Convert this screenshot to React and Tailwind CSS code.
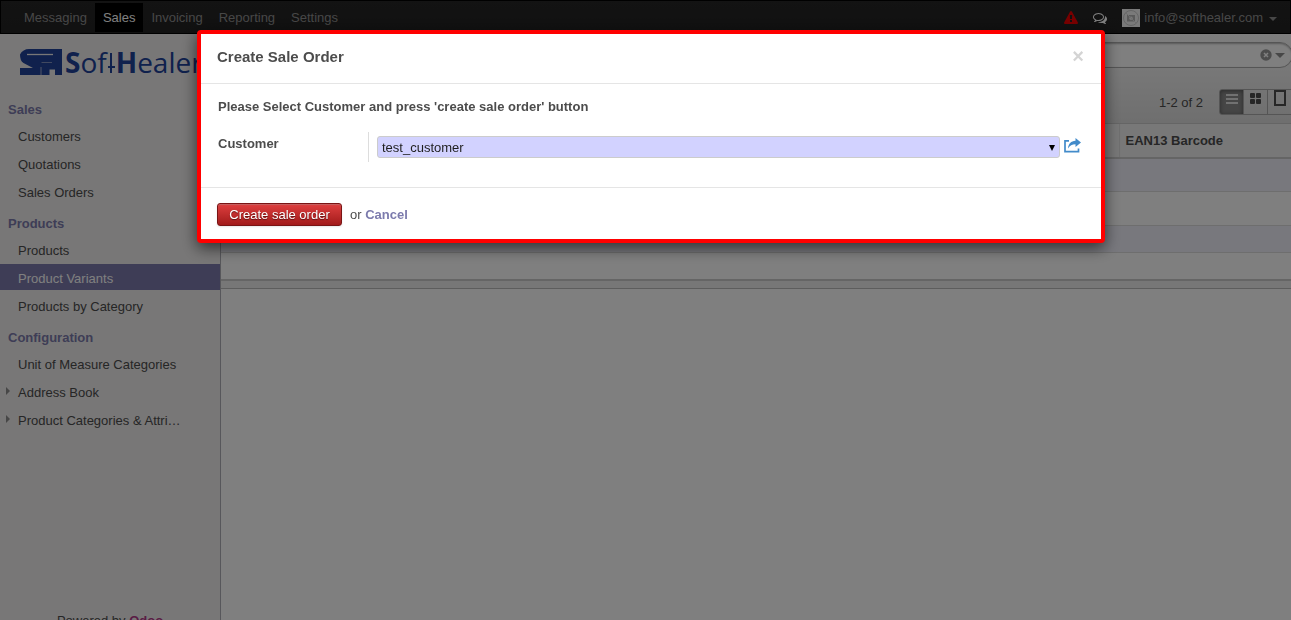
import { useState } from 'react';

const menus = ['Messaging', 'Sales', 'Invoicing', 'Reporting', 'Settings'];

const sections = [
  { title: 'Sales', items: [{ name: 'Customers' }, { name: 'Quotations' }, { name: 'Sales Orders' }] },
  { title: 'Products', items: [{ name: 'Products' }, { name: 'Product Variants' }, { name: 'Products by Category' }] },
  {
    title: 'Configuration',
    items: [
      { name: 'Unit of Measure Categories' },
      { name: 'Address Book', children: true },
      { name: 'Product Categories & Attributes', short: 'Product Categories & Attri…', children: true },
    ],
  },
];

function WarningIcon() {
  return (
    <svg viewBox="0 0 1792 1792" className="size-[14px] fill-[#f00000]" aria-hidden="true">
      <path d="M1024 1375v-190q0-14-9.5-23.5t-22.5-9.5h-192q-13 0-22.5 9.5t-9.5 23.5v190q0 14 9.5 23.5t22.5 9.5h192q13 0 22.5-9.5t9.5-23.5zm-2-374l18-459q0-12-10-19-13-11-24-11h-220q-11 0-24 11-10 7-10 21l17 457q0 10 10 16.5t24 6.5h185q14 0 23.5-6.5t10.5-16.5zm-14-934l768 1408q35 63-2 126-17 29-46.5 46t-63.5 17h-1536q-34 0-63.5-17t-46.5-46q-37-63-2-126l768-1408q17-31 47-49t65-18 65 18 47 49z" />
    </svg>
  );
}

function ChatIcon() {
  return (
    <svg viewBox="0 0 1792 1792" className="size-[14px] fill-white" aria-hidden="true">
      <path d="M704 384q-153 0-286 52t-211.5 141-78.5 191q0 82 53 158t149 132l97 56-35 84q34-20 62-39l44-31 53 10q78 14 153 14 153 0 286-52t211.5-141 78.5-191-78.5-191-211.5-141-286-52zm0-128q191 0 353.5 68.5t256.5 186.5 94 257-94 257-256.5 186.5-353.5 68.5q-86 0-176-16-124 88-278 128-36 9-86 16h-3q-11 0-20.5-8t-11.5-21q-1-3-1-6.5t.5-6.5 2-6l2.5-5 3.5-5.5 4-5 4.5-5 4-4.5q5-6 23-25t26-29.5 22.5-29 25-38.5 20.5-44q-124-72-195-177t-71-224q0-139 94-257t256.5-186.5 353.5-68.5zm822 1169q10 24 20.5 44t25 38.5 22.5 29 26 29.5 23 25q1 1 4 4.5t4.5 5 4 5 3.5 5.5l2.5 5 2 6 .5 6.5-1 6.5q-3 14-13 22t-22 7q-50-7-86-16-154-40-278-128-90 16-176 16-271 0-472-132 58 4 88 4 161 0 309-45t264-129q125-92 192-212t67-254q0-77-23-152 129 71 204 178t75 230q0 120-71 224.5t-195 176.5z" />
    </svg>
  );
}

function Avatar() {
  return (
    <svg viewBox="0 0 18 18" className="size-[18px]" aria-hidden="true">
      <rect width="18" height="18" fill="#f4f4f4" />
      <circle cx="9" cy="9" r="7.5" fill="none" stroke="#ccc" />
      <path d="M5 6h8v6.500H5z" fill="#b5b5b5" />
      <circle cx="9" cy="9.3" r="1.8" fill="#eee" />
      <path d="M3.7 3.7l10.6 10.6" stroke="#ddd" />
    </svg>
  );
}

function Logo() {
  return (
    <div className="flex items-center text-[#20429a]">
      <svg viewBox="0 0 42 26" className="h-[26px] w-[42px] shrink-0" aria-hidden="true">
        <path d="M0 5.500Q3 0 9 0H42V26H35V20.500H29.500V26H0V19H13L3.500 14Q0 12 0 5.500Z" fill="currentColor" />
        <path d="M7 5.500H33" stroke="#f0eeee" strokeWidth="1.300" />
        <path d="M21.500 13.500H32" stroke="#f0eeee" strokeWidth="0.800" opacity="0.6" />
        <path d="M21 26V18" stroke="#f0eeee" strokeWidth="0.800" opacity="0.8" />
      </svg>
      <span className="ml-[3px] flex items-baseline font-['Open_Sans',sans-serif] text-[28px] leading-8">
        <b>S</b>of
        <svg viewBox="0 0 9 20" className="h-5 w-[9px]" aria-hidden="true">
          <path d="M4 0V20M1 14H8" fill="none" stroke="currentColor" strokeWidth="2" />
        </svg>
        <b>H</b>ealer
      </span>
    </div>
  );
}

function TopBar() {
  return (
    <header className="flex h-[34px] shrink-0 items-center justify-between border border-black bg-linear-to-b from-[#262626] to-[#222] pl-[15px] pr-[13px] text-[#8f8f8f]">
      <nav className="flex">
        {menus.map((menu) => (
          <a
            key={menu}
            href="#"
            className={`px-2 pt-px leading-7 ${menu === 'Sales' ? 'bg-black text-white' : ''}`}
          >
            {menu}
          </a>
        ))}
      </nav>
      <div className="flex items-center pt-[2px]">
        <WarningIcon />
        <span className="ml-[15px] flex">
          <ChatIcon />
        </span>
        <button type="button" className="ml-[15px] flex items-center gap-1">
          <Avatar />
          info@softhealer.com
          <span className="ml-[2px] mt-[2px] border-x-4 border-t-4 border-x-transparent border-t-[#8f8f8f]" />
        </button>
      </div>
    </header>
  );
}

function Sidebar() {
  return (
    <aside className="flex w-[221px] shrink-0 flex-col border-r border-[#afafb6] bg-[#f0eeee]">
      <div className="flex h-[58px] shrink-0 items-center pb-[2px] pl-5">
        <Logo />
      </div>
      {sections.map((section) => (
        <section key={section.title}>
          <h2 className="pb-[2px] pl-2 pt-2 font-bold leading-5 text-[#7c7bad]">{section.title}</h2>
          <ul>
            {section.items.map((item) => (
              <li key={item.name} className="mb-[2px]">
                <a
                  href="#"
                  className={`flex h-[26px] items-center pl-[6px] ${
                    item.name === 'Product Variants' ? 'bg-[#7c7bad] text-white' : 'text-[#4c4c4c]'
                  }`}
                >
                  <span className="w-3">
                    {item.children && (
                      <span className="block size-0 border-y-4 border-l-4 border-y-transparent border-l-[#8f8f8f]" />
                    )}
                  </span>
                  <span className="pt-1 leading-5">{item.short || item.name}</span>
                </a>
              </li>
            ))}
          </ul>
        </section>
      ))}
      <footer className="-mb-[11px] mt-auto text-center leading-5">
        Powered by <a href="#" className="font-bold text-[#b5398a]">Odoo</a>
      </footer>
    </aside>
  );
}

function ViewSwitcher() {
  return (
    <div className="-mr-[2px] flex h-[26px] overflow-hidden rounded-l-[3px] border border-[#ababab] text-[#4c4c4c]">
      <button type="button" aria-label="List" className="flex w-[23px] justify-center bg-[#8c8c8c] pt-1 shadow-[inset_0_1px_4px_#555]">
        <svg viewBox="0 0 12 10" className="h-[10px] w-3" aria-hidden="true">
          <path d="M0 1h12M0 5h12M0 9h12" stroke="#fff" strokeWidth="1.500" />
        </svg>
      </button>
      <button type="button" aria-label="Kanban" className="flex w-6 justify-center border-l border-[#ababab] pt-[3px]">
        <svg viewBox="0 0 11 11" className="size-[11px] fill-current" aria-hidden="true">
          <rect width="5" height="5" rx="1" />
          <rect x="6" width="5" height="5" rx="1" />
          <rect y="6" width="5" height="5" rx="1" />
          <rect x="6" y="6" width="5" height="5" rx="1" />
        </svg>
      </button>
      <button type="button" aria-label="Form" className="flex w-[25px] justify-center border-l border-[#ababab]">
        <svg viewBox="0 0 12 16" className="h-4 w-3" aria-hidden="true">
          <rect x="1" y="1" width="10" height="14" fill="none" stroke="currentColor" strokeWidth="2" />
        </svg>
      </button>
    </div>
  );
}

function ProductList() {
  return (
    <table className="w-full border-collapse">
      <thead>
        <tr className="h-[34px] border-b-2 border-[#cacaca] bg-[#f0f0f0]">
          <th />
          <th className="w-[172px] border-l border-[#dfdfdf] pl-[6px] text-left font-bold">EAN13 Barcode</th>
        </tr>
      </thead>
      <tbody>
        <tr className="h-[33px] border-b border-[#dcdcdc] bg-[#f0f0fa]"><td colSpan={2} /></tr>
        <tr className="h-[34px] border-b border-[#dcdcdc]"><td colSpan={2} /></tr>
        <tr className="h-[27px] border-b border-[#dcdcdc] bg-[#f0f0fa]"><td colSpan={2} /></tr>
        <tr className="h-7"><td colSpan={2} /></tr>
      </tbody>
      <tfoot>
        <tr className="h-2 border-b border-t-2 border-b-[#bbb] border-t-[#cacaca] bg-[#eee]"><td colSpan={2} className="p-0" /></tr>
      </tfoot>
    </table>
  );
}

function SaleOrderDialog() {
  const [customer, setCustomer] = useState('test_customer');

  return (
    <div className="fixed inset-0 flex items-start justify-center bg-black/50 pl-[11px] pt-[30px]">
      <div
        role="dialog"
        aria-labelledby="dialog-title"
        className="w-[908px] max-w-full rounded-[4px] border-4 border-[#f00] bg-white shadow-[0_5px_15px_rgba(0,0,0,0.6)]"
      >
        <div className="flex h-[50px] items-center justify-between border-b border-[#e5e5e5] pb-[3px] pl-4 pr-[13px]">
          <h3 id="dialog-title" className="text-[15px] font-bold">Create Sale Order</h3>
          <button type="button" aria-label="Close" className="px-1 pb-[2px] text-[20px] font-bold leading-5 text-[#d4d4d4]">×</button>
        </div>
        <div className="px-[17px] pb-[25px] pt-[13px]">
          <p className="font-bold leading-5">Please Select Customer and press 'create sale order' button</p>
          <div className="mt-[15px] flex h-[30px]">
            <label htmlFor="customer" className="w-[151px] shrink-0 border-r border-[#ddd] pt-[2px] font-bold leading-5">
              Customer
            </label>
            <div className="flex flex-1 items-center pl-2">
              <div className="relative flex-1">
                <select
                  id="customer"
                  value={customer}
                  onChange={(e) => setCustomer(e.target.value)}
                  className="block h-[22px] w-full appearance-none rounded-[3px] border border-[#ccc] bg-[#d2d2ff] pl-1 pt-px text-[#1f1f1f]"
                >
                  <option value="test_customer">test_customer</option>
                </select>
                <span className="pointer-events-none absolute right-[5px] top-[9px] border-x-[3px] border-t-[6px] border-x-transparent border-t-black" />
              </div>
              <button type="button" aria-label="Open customer" className="ml-1 mr-[3px] pb-1">
                <svg viewBox="0 0 17 15" className="h-[15px] w-[17px]" aria-hidden="true">
                  <path d="M5 2.800H1V13.700H14.500V10.500" fill="none" stroke="#428bca" strokeWidth="1.700" />
                  <path d="M11.500 0L17 4.500L11.500 9V6.300C8 6.300 6 7.300 4 10.500C4.300 6 7 3 11.500 2.800Z" fill="#428bca" />
                </svg>
              </button>
            </div>
          </div>
        </div>
        <div className="flex items-center border-t border-[#e5e5e5] px-4 pb-[13px] pt-[15px]">
          <button
            type="button"
            className="h-[23px] w-[125px] rounded-[3px] border border-[#7a1414] bg-linear-to-b from-[#df3f3f] to-[#a21a1a] text-white shadow-[0_1px_2px_rgba(0,0,0,0.1),inset_0_1px_1px_rgba(155,155,155,0.4)] text-shadow-[0_1px_1px_rgba(0,0,0,0.5)]"
          >
            Create sale order
          </button>
          <span className="ml-2">
            or <a href="#" className="font-bold text-[#7c7bad]">Cancel</a>
          </span>
        </div>
      </div>
    </div>
  );
}

export default function App() {
  return (
    <div className="flex h-screen flex-col overflow-hidden bg-white font-['Liberation_Sans',Arial,sans-serif] text-[13px] text-[#4c4c4c]">
      <TopBar />
      <div className="flex min-h-0 flex-1">
        <Sidebar />
        <main className="min-w-0 flex-1 overflow-hidden">
          <div className="border-b border-[#cacaca] bg-linear-to-b from-[#fcfcfc] to-[#dedede] pt-2">
            <div className="flex justify-end">
              <div className="-mr-[2px] flex h-[26px] w-[400px] items-center rounded-full border border-[#ababab] bg-white pr-[7px] shadow-[inset_0_1px_2px_rgba(0,0,0,0.3)]">
                <input aria-label="Search" className="min-w-0 flex-1 bg-transparent px-3 outline-none" />
                <button type="button" aria-label="Clear search">
                  <svg viewBox="0 0 12 12" className="size-3" aria-hidden="true">
                    <circle cx="6" cy="6" r="5.700" fill="#999" />
                    <path d="M4 4l4 4M8 4l-4 4" stroke="#fff" strokeWidth="1.500" />
                  </svg>
                </button>
                <span className="ml-[3px] border-x-[5px] border-t-[5px] border-x-transparent border-t-[#8f8f8f]" />
              </div>
            </div>
            <div className="flex items-center justify-end pb-[8px] pt-[21px]">
              <span className="mr-4 pt-[2px]">1-2 of 2</span>
              <ViewSwitcher />
            </div>
          </div>
          <ProductList />
        </main>
      </div>
      <SaleOrderDialog />
    </div>
  );
}
